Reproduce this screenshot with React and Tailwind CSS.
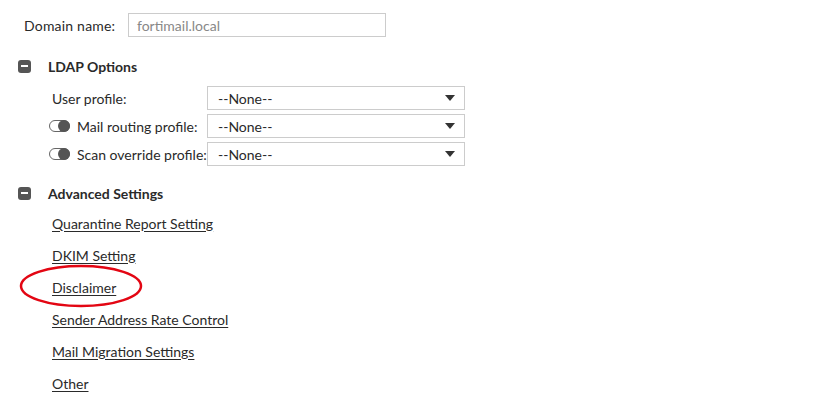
import React from 'react';

const links = [
  'Quarantine Report Setting',
  'DKIM Setting',
  'Disclaimer',
  'Sender Address Rate Control',
  'Mail Migration Settings',
  'Other',
];

const Collapse = () => (
  <span className="w-[13px] h-[13px] rounded-[3px] bg-[#555] flex items-center justify-center">
    <span className="w-[7px] h-[2px] bg-white" />
  </span>
);

const Toggle = () => (
  <span className="relative w-[21px] h-[12px] rounded-full border border-[#666] bg-white mr-[7px]">
    <span className="absolute right-[-1px] top-[-1px] w-[12px] h-[12px] rounded-full bg-[#555]" />
  </span>
);

const SelectBox = () => (
  <div className="w-[258px] h-[24px] border border-[#ccc] flex items-center justify-between pl-[10px] pr-[9px] text-[#2a2a2a]">
    <span>--None--</span>
    <svg width="10" height="6" viewBox="0 0 10 6">
      <path d="M0 0 L10 0 L5 6 Z" fill="#333" />
    </svg>
  </div>
);

const App = () => {
  return (
    <div className="w-[821px] h-[416px] bg-white text-[#2a2a2a] text-[14px] font-['Lato',sans-serif]">
      {/* Domain */}
      <div className="flex items-center pt-[13px] pl-[24px]">
        <span className="w-[104px] tracking-[0.2px]">Domain name:</span>
        <div className="w-[258px] h-[24px] border border-[#ccc] flex items-center pl-[8px] text-[#888]">
          fortimail.local
        </div>
      </div>

      {/* LDAP Options */}
      <div className="mt-[17px] h-[24px] flex items-center pl-[18px]">
        <Collapse />
        <span className="ml-[17px] font-bold">LDAP Options</span>
      </div>
      <div className="mt-[8px] pl-[49px] flex flex-col gap-[4px]">
        <div className="flex items-center h-[24px]">
          <span className="w-[158px] pl-[3px]">User profile:</span>
          <SelectBox />
        </div>
        <div className="flex items-center h-[24px]">
          <span className="w-[158px] flex items-center">
            <Toggle />
            Mail routing profile:
          </span>
          <SelectBox />
        </div>
        <div className="flex items-center h-[24px]">
          <span className="w-[158px] flex items-center whitespace-nowrap">
            <Toggle />
            Scan override profile:
          </span>
          <SelectBox />
        </div>
      </div>

      {/* Advanced Settings */}
      <div className="mt-[15px] h-[24px] flex items-center pl-[18px]">
        <Collapse />
        <span className="ml-[17px] font-bold">Advanced Settings</span>
      </div>
      <div className="mt-[2px] pl-[52px] flex flex-col">
        {links.map((l) => (
          <div key={l} className="h-[32px] flex items-center">
            <span className="relative underline underline-offset-2">
              {l}
              {l === 'Disclaimer' && (
                <svg
                  className="absolute left-[-33px] top-[-13px] pointer-events-none"
                  width="125"
                  height="44"
                  viewBox="0 0 125 44"
                >
                  <ellipse cx="62" cy="22" rx="60" ry="20" fill="none" stroke="#e30613" strokeWidth="2.5" />
                </svg>
              )}
            </span>
          </div>
        ))}
      </div>
    </div>
  );
};

export default App;
